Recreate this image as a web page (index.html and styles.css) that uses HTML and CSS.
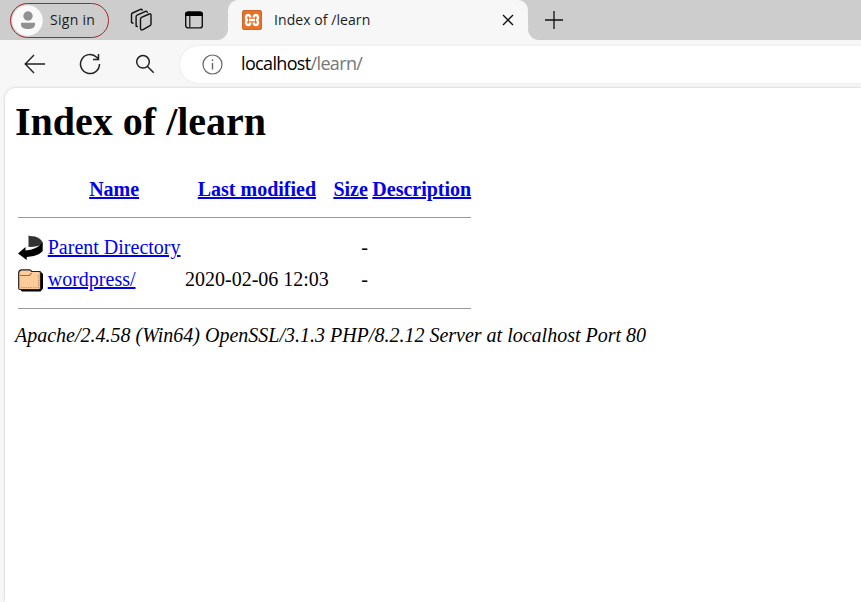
FILE: index.html
```html
<!DOCTYPE html>
<html lang="en">
<head>
    <meta charset="UTF-8">
    <meta name="viewport" content="width=device-width, initial-scale=1.0">
    <title>Index of /learn</title>
    <link rel="stylesheet" href="styles.css">
</head>
<body>
    <header class="tab-bar">
        <div class="strip strip-left">
            <button class="profile">
                <svg class="avatar" width="31" height="31" viewBox="0 0 31 31">
                    <circle cx="15.5" cy="15.5" r="15.3" fill="#f9f9f9"/>
                    <circle cx="16" cy="11" r="4.7" fill="#919191"/>
                    <path d="M9 17.7h14v1.8c0 3.1-3.1 4.6-7 4.6s-7-1.5-7-4.6z" fill="#919191"/>
                </svg>
                <span class="profile-name">Sign in</span>
            </button>
            <svg class="workspaces" width="24" height="24" viewBox="0 0 24 24" fill="none" stroke="#111" stroke-width="1.4" stroke-linejoin="round" stroke-linecap="round">
                <path d="M10.5 11q0-1.2 1-1.7l7.700-3.300q1.800-.6 1.800 1v9q0 1-1 1.600l-7 4q-2 1-2.500-.8z"/>
                <path d="M7.300 18.500l-1.200-.5V8.700q0-1 1-1.500l8.500-3.900q1.200-.3 1.700 1"/>
                <path d="M3 15.200l-1.500-.7V6.500q0-1 1-1.500l8-3.700q1.200-.4 1.800.8"/>
            </svg>
            <svg class="tab-actions" width="20" height="20" viewBox="0 0 20 20">
                <rect x="1.700" y="2.200" width="16.600" height="15.700" rx="2.500" fill="none" stroke="#111" stroke-width="1.400"/>
                <path d="M1 6V4.500Q1 1.500 4 1.500h12q3 0 3 3V6z" fill="#000"/>
                <path d="M5.800 6v11.500" stroke="#111" stroke-width="1.200"/>
            </svg>
        </div>
        <div class="tab-wrap">
            <div class="tab">
                <svg class="favicon" width="20" height="20" viewBox="0 0 20 20">
                    <rect x=".5" y=".5" width="19" height="19" rx="1.5" fill="#ea7023" stroke="#c96a30"/>
                    <path d="M8.200 7.500V7a2 2 0 0 0-2-2C3.600 5 3.500 8.500 5 10c-1.500 1.500-1.400 5 1.200 5a2 2 0 0 0 2-2v-.5M11.800 7.500V7a2 2 0 0 1 2-2c2.600 0 2.700 3.500 1.200 5 1.500 1.500 1.400 5-1.200 5a2 2 0 0 1-2-2v-.5M7 10h6" fill="none" stroke="#fff" stroke-width="2.400" stroke-linejoin="round"/>
                </svg>
                <span class="tab-title">Index of /learn</span>
                <svg class="close" width="12" height="12" viewBox="0 0 12 12" stroke="#111" stroke-width="1.4">
                    <path d="M1 1l10 10M11 1L1 11"/>
                </svg>
            </div>
        </div>
        <div class="strip strip-right">
            <svg width="18" height="18" viewBox="0 0 18 18" stroke="#111" stroke-width="1.3">
                <path d="M0 9h18M9 0v18"/>
            </svg>
        </div>
    </header>

    <nav class="toolbar">
        <svg class="back" width="22" height="20" viewBox="0 0 22 20" fill="none" stroke="#222" stroke-width="1.4">
            <path d="M21 10H1.5M10 1L1.2 10l8.800 9"/>
        </svg>
        <svg class="reload" width="22" height="22" viewBox="0 0 22 22" fill="none" stroke="#222" stroke-width="1.5">
            <path d="M20.500 11A9.500 9.500 0 1 1 17.700 4.300l2 2M19.500 1v5.500H14"/>
        </svg>
        <svg class="search" width="20" height="20" viewBox="0 0 20 20" fill="none" stroke="#222" stroke-width="1.5">
            <circle cx="8" cy="7.8" r="6.3"/>
            <path d="M12.5 12.5l6.200 6.200"/>
        </svg>
        <div class="address-bar">
            <svg class="info" width="21" height="21" viewBox="0 0 21 21" fill="none" stroke="#666" stroke-width="1.2">
                <circle cx="10.5" cy="10.5" r="9.5"/>
                <path d="M10.5 9v6.500M10.500 5.300v1.600" stroke-width="1.4"/>
            </svg>
            <span class="url">localhost<span class="url-path">/learn/</span></span>
        </div>
    </nav>

    <main class="page">
        <h1>Index of /learn</h1>
        <table>
            <tr class="head">
                <th></th>
                <th><a href="#">Name</a></th>
                <th class="date"><a href="#">Last modified</a></th>
                <th><a href="#">Size</a></th>
                <th><a href="#">Description</a></th>
            </tr>
            <tr><th colspan="5"><hr></th></tr>
            <tr>
                <td class="icon">
                    <svg width="25" height="27.5" viewBox="0 0 25 27.5">
                        <path d="M10.5 1.500l1.500.5 5 .5q5.500 1.500 7.500 5.500v3l-5 1q-3 1-9 1z" fill="#333"/>
                        <path d="M24.700 8.500v8.500q-4 5.200-16 6v3L0 19.500 7.500 13v3.500q11-.5 17-8z" fill="#000"/>
                    </svg>
                </td>
                <td><a href="#">Parent Directory</a></td>
                <td class="date"></td>
                <td class="size">-</td>
                <td></td>
            </tr>
            <tr>
                <td class="icon">
                    <svg width="25" height="27.5" viewBox="0 0 25 27.5">
                        <path d="M3 5h19l3 3v14.500l-2.500 3H4l-3-3z" fill="#000"/>
                        <path d="M.7 7q0-2.500 2.500-3.200h8.300q1.500 0 2 1.700H21q1.500 0 1.500 1.500v15q0 1.500-1.500 1.500H2.200Q.7 23.500.7 22z" fill="#fc9" stroke="#222" stroke-width="1.2"/>
                        <path d="M2 9.500h9.500l2-2.500" fill="none" stroke="#9b6b43" stroke-width="1.2"/>
                        <path d="M3 21.500h17.500V8.500" fill="none" stroke="#c98a5a" stroke-width="1.2" stroke-dasharray="1.2 1.2"/>
                    </svg>
                </td>
                <td><a href="#">wordpress/</a></td>
                <td class="date">2020-02-06 12:03</td>
                <td class="size">-</td>
                <td></td>
            </tr>
            <tr class="foot"><th colspan="5"><hr></th></tr>
        </table>
        <address>Apache/2.4.58 (Win64) OpenSSL/3.1.3 PHP/8.2.12 Server at localhost Port 80</address>
    </main>
</body>
</html>
```
FILE: styles.css
```css
* {
    box-sizing: border-box;
}
body {
    margin: 0;
    height: 602px;
    display: flex;
    flex-direction: column;
    overflow: hidden;
    background-color: #f7f7f7;
    font-family: "Open Sans", "Noto Sans", sans-serif;
}
svg {
    display: block;
    flex-shrink: 0;
}

/* Tab bar */
.tab-bar {
    display: flex;
    height: 40px;
    flex-shrink: 0;
}
.strip {
    display: flex;
    align-items: center;
    background-color: #cdcdcd;
}
.strip-left {
    width: 228px;
    padding-left: 10px;
    border-bottom-right-radius: 11px;
}
.strip-right {
    flex: 1;
    padding: 0 0 1px 17px;
    border-bottom-left-radius: 11px;
}
.profile {
    display: flex;
    align-items: center;
    width: 99px;
    height: 35px;
    padding: 0 0 0 1px;
    border: 1px solid #a4262c;
    border-radius: 18px;
    background: none;
    font-family: inherit;
}
.profile-name {
    margin-left: 7px;
    padding-bottom: 2px;
    font-size: 14px;
    letter-spacing: 0.3px;
    white-space: nowrap;
    color: #1b1b1b;
}
.workspaces {
    margin-left: 21px;
}
.tab-actions {
    margin-left: 30px;
}
.tab-wrap {
    width: 300px;
    background: linear-gradient(#cdcdcd 20px, #f7f7f7 20px);
}
.tab {
    display: flex;
    align-items: center;
    height: 40px;
    padding: 0 14px;
    border-radius: 10px 10px 0 0;
    background-color: #f7f7f7;
}
.tab-title {
    flex: 1;
    margin-left: 12px;
    padding-bottom: 2px;
    font-size: 14px;
    letter-spacing: 0.07px;
    color: #1b1b1b;
}

/* Toolbar */
.toolbar {
    display: flex;
    align-items: center;
    height: 48px;
    padding-left: 24px;
    flex-shrink: 0;
}
.reload {
    margin-left: 33px;
}
.search {
    margin-left: 34px;
}
.address-bar {
    display: flex;
    align-items: center;
    flex: 1;
    height: 37px;
    margin-left: 25px;
    padding-left: 22px;
    border-radius: 19px 0 0 19px;
    background-color: #fff;
    box-shadow: 0 0 3px rgba(0, 0, 0, 0.08);
}
.url {
    margin-left: 18px;
    padding-bottom: 2px;
    font-size: 18px;
    letter-spacing: -0.65px;
    color: #000;
}
.url-path {
    color: #767676;
}

/* Directory listing */
.page {
    flex: 1;
    margin-left: 5px;
    padding: 11px 10px;
    border-top-left-radius: 10px;
    background-color: #fff;
    box-shadow: 0 0 3px rgba(0, 0, 0, 0.2);
    font-family: "Liberation Serif", "Times New Roman", serif;
    font-size: 20px;
    color: #000;
}
h1 {
    margin: 0 0 29px;
    font-size: 40px;
    line-height: 46px;
}
table {
    border-spacing: 2.5px;
}
th, td {
    padding: 1.25px;
    line-height: 22.5px;
    white-space: nowrap;
}
.head th {
    line-height: 24.5px;
}
td.icon {
    vertical-align: top;
}
.date {
    width: 146px;
    text-align: right;
}
th.date {
    text-align: center;
}
.size {
    text-align: right;
}
hr {
    margin: 11px 0;
    border: 0;
    border-top: 1px solid #999;
}
.foot hr {
    margin-top: 10px;
}
a {
    color: #0000ee;
}
address {
    line-height: 24px;
}
```
